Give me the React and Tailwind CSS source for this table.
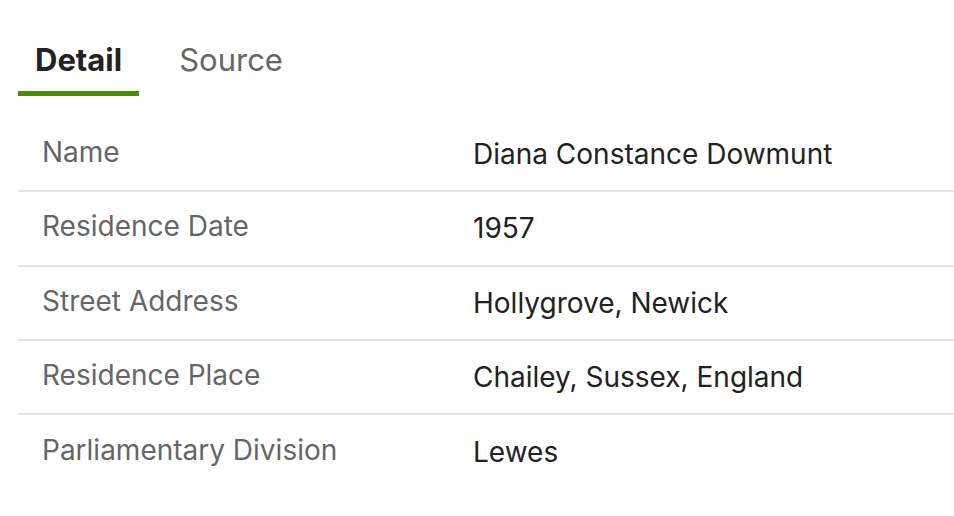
export default function App() {
  const rows = [
    ["Name", "Diana Constance Dowmunt"],
    ["Residence Date", "1957"],
    ["Street Address", "Hollygrove, Newick"],
    ["Residence Place", "Chailey, Sussex, England"],
    ["Parliamentary Division", "Lewes"],
  ];
  return (
    <div className="w-[954px] h-[516px] bg-white overflow-hidden" style={{ fontFamily: "Inter, 'Noto Sans', sans-serif" }}>
      <div className="pl-[18px] pt-[36px] flex">
        <div className="flex flex-col">
          <div className="px-[17px] text-[31px] leading-[48px] font-bold text-[#222]">Detail</div>
          <div className="mt-[7px] h-[5px] bg-[#4d8a0c]" />
        </div>
        <div className="ml-[23px] px-[17px] text-[31px] leading-[48px] text-[#666]">Source</div>
      </div>
      <div className="ml-[18px] mt-[22px]">
        {rows.map(([k, v], i) => (
          <div key={k} className={"flex items-center h-[74.25px] " + (i < rows.length - 1 ? "border-b-2 border-[#e5e5e5]" : "")}>
            <div className="w-[455px] pl-[24px] text-[28px] leading-[34px] text-[#666] -mt-[4px]">{k}</div>
            <div className="text-[28px] leading-[34px] text-[#222]">{v}</div>
          </div>
        ))}
      </div>
    </div>
  );
}
